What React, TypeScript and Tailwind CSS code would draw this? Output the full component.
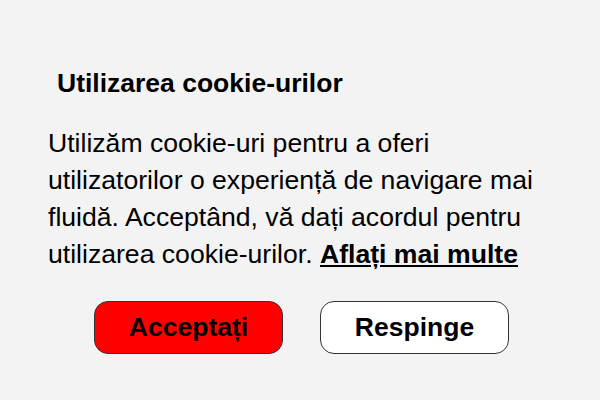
export default function App() {
  return (
    <div
      className="w-[600px] h-[400px] bg-[#f3f3f3] text-black pt-[68px] px-[48px]"
      style={{ fontFamily: '"Liberation Sans", Arial, sans-serif' }}
    >
      <h1 className="pl-[9px] text-[26.5px] leading-[30px] font-bold">Utilizarea cookie-urilor</h1>
      <p className="mt-[27px] w-[504px] text-[26.6px] leading-[37px]">
        Utilizăm cookie-uri pentru a oferi utilizatorilor o experiență de navigare mai fluidă. Acceptând, vă dați acordul pentru utilizarea cookie-urilor.{" "}
        <a href="#" className="font-bold underline">Aflați mai multe</a>
      </p>
      <div className="mt-[28px] flex justify-center gap-[37px] pl-[3px]">
        <button className="w-[189px] h-[53px] rounded-[14px] border border-[#333] bg-[#ff0000] text-[26.5px] font-bold leading-none">
          Acceptați
        </button>
        <button className="w-[189px] h-[53px] rounded-[14px] border border-[#333] bg-white text-[26.5px] font-bold leading-none">
          Respinge
        </button>
      </div>
    </div>
  );
}
